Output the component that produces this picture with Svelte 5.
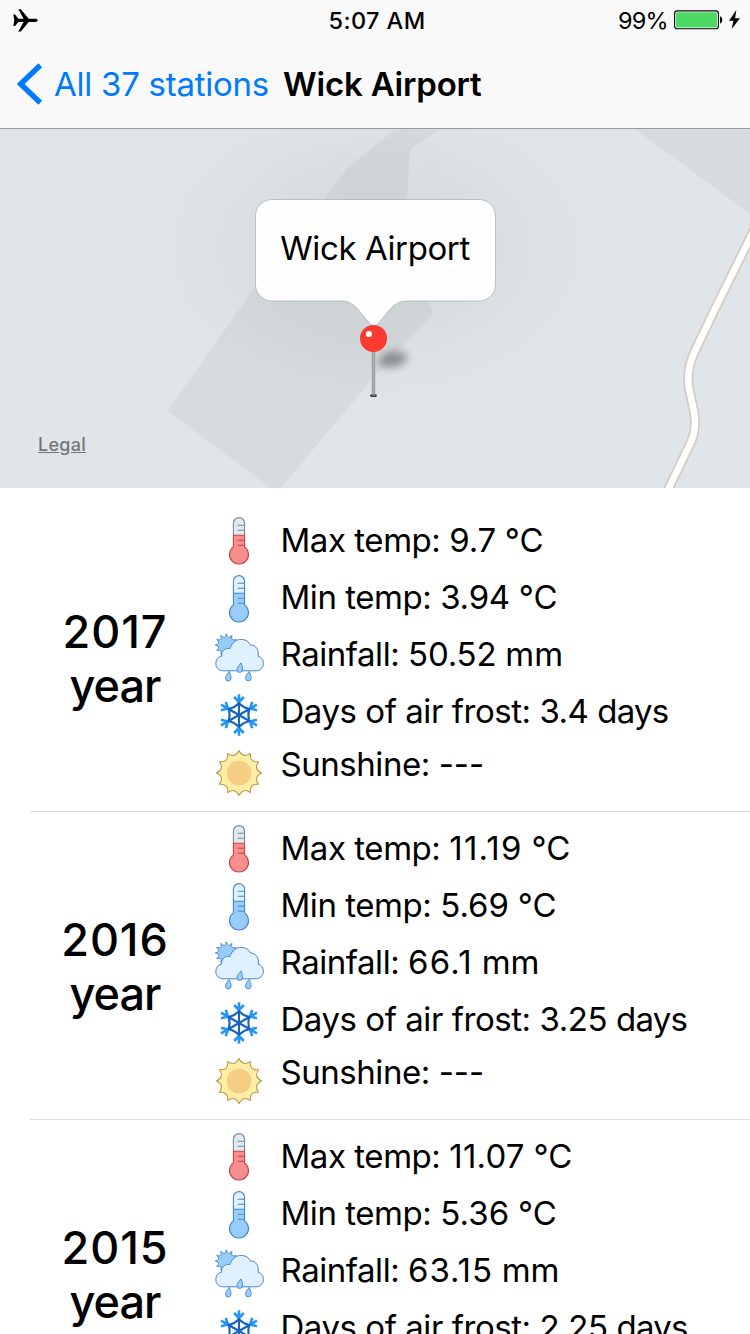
<script>
  const years = [
    {
      year: 2017,
      max: { value: '9.7', track: -0.2 },
      min: { value: '3.94', track: -0.25 },
      rain: { value: '50.52', track: -0.2 },
      frost: { value: '3.4', track: -0.5 }
    },
    {
      year: 2016,
      max: { value: '11.19', track: 1.2 },
      min: { value: '5.69', track: 0 },
      rain: { value: '66.1', track: 1.2 },
      frost: { value: '3.25', track: -0.4 }
    },
    {
      year: 2015,
      max: { value: '11.07', track: 0.2 },
      min: { value: '5.36', track: 0.1 },
      rain: { value: '63.15', track: 0.9 },
      frost: { value: '2.25', track: -0.4 }
    }
  ];

  const polar = (r, deg, c = 25) => {
    const a = (deg * Math.PI) / 180;
    return `${(c + r * Math.cos(a)).toFixed(2)} ${(c + r * Math.sin(a)).toFixed(2)}`;
  };

  // Spiked ring whose sides curve inwards between neighbouring tips.
  const burst = (tips, outer, inner, c = 25) => {
    const step = 360 / tips;
    let d = `M${polar(outer, -90, c)}`;
    for (let i = 0; i < tips; i++) {
      d += `Q${polar(inner, -90 + step * (i + 0.5), c)} ${polar(outer, -90 + step * (i + 1), c)}`;
    }
    return d + 'Z';
  };

  const sunRing = burst(12, 22.6, 14.8);
  const smallSun = burst(12, 11.2, 5, 12.4);
  const arms = [0, 60, 120, 180, 240, 300];
</script>

{#snippet thermometer(kind)}
  <svg class="icon thermo {kind}" viewBox="0 0 50 50">
    <path class="glass" d="M19.4 31V7.2a5.6 5.6 0 0 1 11.2 0V31Z" />
    <path class="fluid" d="M19.4 19.3h11.2v11.6a9.5 9.5 0 1 1-11.2 0Z" />
    <path class="rim" d="M19.4 19V7.2a5.6 5.6 0 0 1 11.2 0V19M23.7 9.3h6.9M23.7 14.3h6.9" />
    <path class="edge" d="M19.4 19.3h11.2v11.6a9.5 9.5 0 1 1-11.2 0ZM23.7 24.3h6.9M23.7 29.3h6.9" />
  </svg>
{/snippet}

{#snippet fact(label, item, unit)}
  <p>{label}: <span style="letter-spacing: {item.track}px">{item.value}</span> <span class={unit === 'days' ? 'tight' : 'unit'}>{unit}</span></p>
{/snippet}

<div class="screen">
  <header>
    <div class="status">
      <svg class="plane" viewBox="0 0 25 23">
        <path d="M.3 5.6h1.8l3.2 4.1h5.3L5.3.3h2.6l7.8 9.4h6.4c1.5 0 2.6.7 2.6 1.6s-1.1 1.6-2.6 1.6h-6.4L7.9 22.6H5.3l5.3-9.7H5.3L2.1 17H.3l1-5.7Z" />
      </svg>
      <span class="time">5:07 AM</span>
      <div class="power">
        <span class="percent">99%</span>
        <svg class="battery" viewBox="0 0 67 20">
          <rect x=".6" y=".9" width="43.8" height="17.8" rx="2.8" fill="#fff" stroke="#000" stroke-width="1.1" />
          <rect x="2" y="2.2" width="41" height="15.2" rx="1.5" fill="#4cd964" />
          <path d="M46 6.2c3 .6 3 6.6 0 7.2Z" />
          <path d="M62.3 0 55 10.8h4.4L57.7 19 66 8.2h-4.9Z" />
        </svg>
      </div>
    </div>
    <nav>
      <svg class="chevron" viewBox="0 0 26 42">
        <path d="M23.3 2.2 3.6 21l19.7 18.8" fill="none" stroke="#007aff" stroke-width="5.4" />
      </svg>
      <span class="back">All 37 stations</span>
      <h1>Wick Airport</h1>
    </nav>
  </header>

  <section class="map">
    <svg viewBox="0 129 750 359">
      <defs>
        <radialGradient id="halo" gradientUnits="userSpaceOnUse" cx="0" cy="0" r="1" gradientTransform="translate(375 248) scale(226 158)">
          <stop offset="0" stop-color="#2a2a32" stop-opacity=".06" />
          <stop offset=".5" stop-color="#2a2a32" stop-opacity=".042" />
          <stop offset=".75" stop-color="#2a2a32" stop-opacity=".018" />
          <stop offset="1" stop-color="#2a2a32" stop-opacity="0" />
        </radialGradient>
        <linearGradient id="stem" x1="0" x2="1">
          <stop offset="0" stop-color="#85878a" />
          <stop offset=".5" stop-color="#b5b6b9" />
          <stop offset="1" stop-color="#85878a" />
        </linearGradient>
        <filter id="soft" x="-60%" y="-100%" width="220%" height="300%"><feGaussianBlur stdDeviation="4.5" /></filter>
      </defs>
      <rect y="129" width="750" height="359" fill="#e0e5e9" />
      <path fill="#d6dbde" d="M395 129H439L410 150 407 201 420 271 432.7 313.7 380 370 280.7 488H271L167.7 410.7 253 290 323 200 348 168ZM635 129H750V214Z" />
      <g fill="none">
        <path stroke="#d3cac0" stroke-width="10" d="M756 226 713 313 695 351Q686 370 689 388L694 412Q697 428 691 442L666 494" />
        <path stroke="#fff" stroke-width="6.6" d="M756 226 713 313 695 351Q686 370 689 388L694 412Q697 428 691 442L666 494" />
      </g>
      <rect y="129" width="750" height="359" fill="url(#halo)" />
      <ellipse cx="393" cy="359.5" rx="14.5" ry="7.5" transform="rotate(-12 393 360)" fill="#000" opacity=".37" filter="url(#soft)" />
      <path
        d="M272 199.5H479A16.5 16.5 0 0 1 495.5 216V284.5A16.5 16.5 0 0 1 479 301H405C396 301.5 391 308 386.5 313.5L380 321.5Q374 330 368 321.5L361.5 313.5C357 308 352 301.5 343 301H272A16.5 16.5 0 0 1 255.5 284.5V216A16.5 16.5 0 0 1 272 199.5Z"
        fill="#fff" fill-opacity=".965" stroke="#9da2a8" stroke-opacity=".6"
      />
      <rect x="371.9" y="350" width="3.2" height="46" fill="url(#stem)" />
      <ellipse cx="373.5" cy="395.6" rx="3.4" ry="1.5" fill="#303537" />
      <path d="M371.9 395h3.2" stroke="#b5b6b9" />
      <circle cx="373.5" cy="338.4" r="13.5" fill="#fd3a2f" />
      <circle cx="368.9" cy="334" r="3.1" fill="#fff" />
    </svg>
    <span class="callout">Wick Airport</span>
    <span class="legal">Legal</span>
  </section>

  <main>
    {#each years as y}
      <article>
        <div class="year"><span class="number">{y.year}</span><span class="word">year</span></div>
        <div class="icons">
          {@render thermometer('hot')}
          {@render thermometer('cold')}
          <svg class="icon" viewBox="0 -.6 50 50" stroke-linejoin="round">
            <path d={smallSun} fill="#98ccfd" stroke="#4788c7" stroke-width=".9" />
            <circle cx="12.4" cy="12.4" r="6.2" fill="#98ccfd" />
            <path d="M9.3 38.2C4.8 38.2 1.8 35 1.8 30.8 1.8 27 4.2 24.2 7.7 23.5 7 18.5 11.5 14.5 16 16 18 9.8 22.5 6.6 27.5 6.8 31.8 7 35 9 36.5 12.5 41.5 12 45.5 17.5 44 23.4 47.5 24.5 49.6 27.4 49.4 31 49.1 35.2 46 38.2 42 38.2Z" fill="#dff0fe" stroke="#4788c7" />
            <g fill="#98ccfd" stroke="#4788c7" stroke-width=".9">
              <path d="M15.2 38.8C13.5 41 11.5 43.4 11.5 45.5a2.8 2.8 0 0 0 5.6 0C17.1 43.4 16.2 41 15.2 38.8Z" />
              <path d="M27 30.3C25.3 32.5 23 34.9 23 37a2.8 2.8 0 0 0 5.6 0C28.6 34.9 28 32.5 27 30.3Z" />
              <path d="M35.2 38.8C33.5 41 31.5 43.4 31.5 45.5a2.8 2.8 0 0 0 5.6 0C37.1 43.4 36.2 41 35.2 38.8Z" />
            </g>
          </svg>
          <svg class="icon" viewBox="0 0 50 50" fill="none">
            {#each arms as a}
              <g transform="rotate({a} 25 25)">
                <path d="M25 14V4.2M20.2 7 25 12.2 29.8 7" stroke="#2196f3" stroke-width="2.6" />
                <path d="M25 25V12M25 13.2Q29 17.4 35.2 19.1" stroke="#1565c0" stroke-width="2.1" />
              </g>
            {/each}
          </svg>
          <svg class="icon" viewBox="0 0 50 50">
            <path d={sunRing} fill="#ffeea3" stroke="#ba9b48" stroke-width="1.1" stroke-linejoin="round" />
            <circle cx="25" cy="25" r="12.3" fill="#f5ce85" />
          </svg>
        </div>
        <div class="facts">
          {@render fact('Max temp', y.max, '°C')}
          {@render fact('Min temp', y.min, '°C')}
          {@render fact('Rainfall', y.rain, 'mm')}
          {@render fact('Days of air frost', y.frost, 'days')}
          <p>Sunshine: <span class="unit">---</span></p>
        </div>
      </article>
    {/each}
  </main>
</div>

<style>
  :global(body) { margin: 0; background: #fff; overflow: hidden; }
  .screen {
    width: 750px;
    height: 1334px;
    overflow: hidden;
    display: flex;
    flex-direction: column;
    background: #fff;
    color: #000;
    font-family: Inter, "Liberation Sans", sans-serif;
  }
  header {
    box-sizing: border-box;
    flex: none;
    height: 129px;
    background: #f9f9f9;
    border-bottom: 1px solid #979ba0;
  }
  .status {
    display: grid;
    grid-template-columns: 1fr auto 1fr;
    align-items: center;
    height: 40px;
    padding: 0 9px 0 13px;
    font-size: 23.5px;
  }
  .plane { width: 25px; height: 23px; }
  .time { font-weight: 500; letter-spacing: .4px; }
  .power { display: flex; justify-content: flex-end; align-items: center; gap: 6px; }
  .percent { letter-spacing: -.7px; }
  .battery { width: 67px; height: 20px; }
  nav { display: flex; align-items: center; height: 88px; padding-left: 17px; }
  .chevron { width: 26px; height: 42px; margin-right: 11px; }
  .back { color: #007aff; font-size: 33px; letter-spacing: -.25px; white-space: nowrap; }
  h1 { margin: 0 0 0 14px; font-size: 33px; font-weight: 600; letter-spacing: -.2px; white-space: nowrap; }
  .map { position: relative; flex: none; height: 359px; }
  .map svg { display: block; width: 750px; height: 359px; }
  .callout {
    position: absolute;
    left: 255px;
    top: 99px;
    width: 240px;
    text-align: center;
    font-size: 33px;
    line-height: 41px;
    letter-spacing: -.4px;
  }
  .legal {
    position: absolute;
    left: 38px;
    top: 305px;
    font-size: 18px;
    font-weight: 500;
    line-height: 22px;
    letter-spacing: .25px;
    color: #74777a;
    text-decoration: underline;
  }
  main { flex: none; padding-top: 16px; }
  article {
    box-sizing: border-box;
    display: flex;
    height: 308px;
    margin-left: 30px;
    border-bottom: 1px solid #dcdce0;
  }
  .year {
    display: flex;
    flex-direction: column;
    justify-content: center;
    width: 170px;
    padding-top: 2px;
    text-align: center;
    font-size: 45px;
    line-height: 54px;
    font-weight: 500;
  }
  .number { letter-spacing: .9px; }
  .word { letter-spacing: -1px; }
  .icons { display: flex; flex-direction: column; gap: 8px; width: 50px; padding: 12px 0 0 14px; }
  .icon { display: block; flex: none; width: 50px; height: 50px; }
  .thermo path { fill: none; stroke-width: 1.1; }
  .thermo .glass { fill: #dff0fe; }
  .thermo .fluid { fill: #98ccfd; }
  .thermo .rim, .thermo .edge { stroke: #4788c7; }
  .hot .glass { fill: #dfe9f1; }
  .hot .fluid { fill: #f78f8f; }
  .hot .rim { stroke: #788b9c; }
  .hot .edge { stroke: #c74343; }
  .facts { display: flex; flex-direction: column; gap: 16px; padding: 16px 0 0 16.5px; }
  p { margin: 0; font-size: 33px; line-height: 41px; letter-spacing: -.45px; white-space: nowrap; }
  p:last-child { margin-top: -4px; }
  .unit { letter-spacing: 0; }
  .tight { letter-spacing: -.8px; }
</style>
